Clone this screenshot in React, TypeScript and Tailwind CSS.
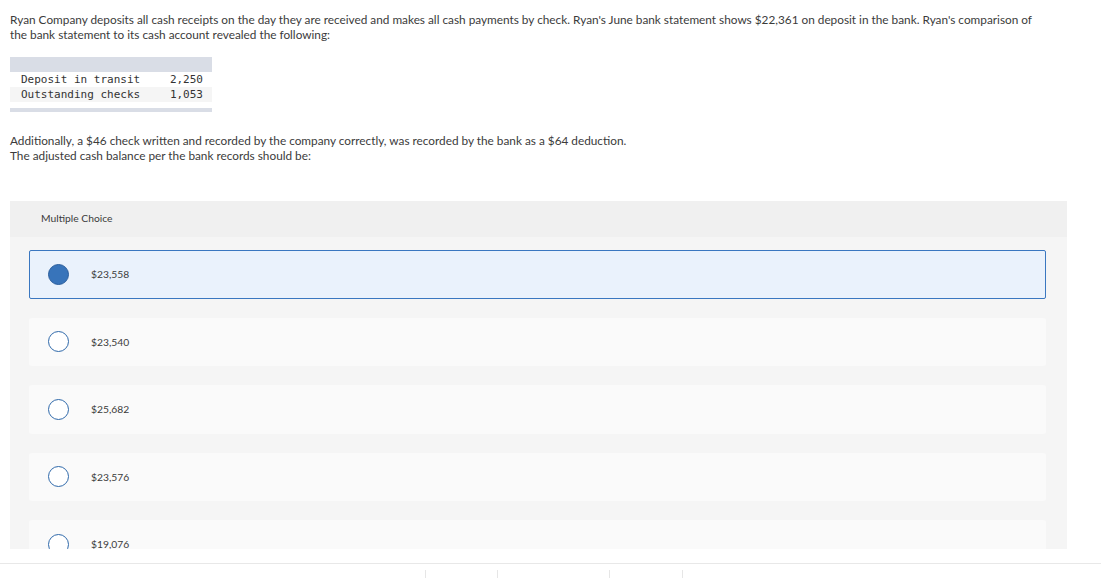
import React from "react";

const options = [
  { label: "$23,558", selected: true },
  { label: "$23,540", selected: false },
  { label: "$25,682", selected: false },
  { label: "$23,576", selected: false },
  { label: "$19,076", selected: false },
];

function Radio({ selected }: { selected: boolean }) {
  return selected ? (
    <span className="block w-[21px] h-[21px] rounded-full bg-[#3874ba] border border-[#2b5e9c] shrink-0" />
  ) : (
    <span className="block w-[21px] h-[21px] rounded-full bg-white border-[1.5px] border-[#2f69aa] shrink-0" />
  );
}

export default function App() {
  return (
    <div className="w-[1101px] h-[578px] bg-white overflow-hidden text-[#3b3b3b]" style={{ fontFamily: "Lato, 'Open Sans', sans-serif" }}>
      <div className="h-[549px] overflow-hidden pl-[10px]">
        <p className="pt-[12px] text-[11.8px] leading-[15px] w-[1034px]">
          Ryan Company deposits all cash receipts on the day they are received and makes all cash payments by check. Ryan's June bank statement shows $22,361 on deposit in the bank. Ryan's comparison of the bank statement to its cash account revealed the following:
        </p>
        <div className="mt-[15px] w-[202px] text-[#333]" style={{ fontFamily: "'DejaVu Sans Mono', monospace" }}>
          <div className="h-[15px] bg-[#d9dde6]" />
          <div className="h-[15px] flex items-center justify-between pl-[11px] pr-[9px] text-[11px] leading-[15px] bg-white">
            <span>Deposit in transit</span>
            <span>2,250</span>
          </div>
          <div className="h-[15px] flex items-center justify-between pl-[11px] pr-[9px] text-[11px] leading-[15px] bg-[#f5f5f5]">
            <span>Outstanding checks</span>
            <span>1,053</span>
          </div>
          <div className="h-[4px] mt-[6px] bg-[#d9dde6]" />
        </div>
        <p className="mt-[21px] text-[11.8px] leading-[15px]">
          Additionally, a $46 check written and recorded by the company correctly, was recorded by the bank as a $64 deduction.
          <br />
          The adjusted cash balance per the bank records should be:
        </p>
        <div className="mt-[38px] w-[1057px] bg-[#f5f5f5]">
          <div className="h-[36px] bg-[#f0f0f0] flex items-center pl-[31px] text-[10.3px]">Multiple Choice</div>
          <div className="flex flex-col gap-[19px] pt-[13px] pl-[19px] pr-[21px] pb-[20px]">
            {options.map((o) => (
              <div
                key={o.label}
                className={
                  o.selected
                    ? "h-[48.5px] flex items-center gap-[22px] pl-[18px] rounded-[2px] border border-[#3a77c0] bg-[#eaf2fc]"
                    : "h-[48.5px] flex items-center gap-[22px] pl-[19px] rounded-[3px] bg-[#fafafa]"
                }
              >
                <Radio selected={o.selected} />
                <span className="text-[10.3px] leading-[14px]">{o.label}</span>
              </div>
            ))}
          </div>
        </div>
      </div>
      <div className="mt-[14px] border-t border-[#e8e8e8] h-[15px] relative">
        <span className="absolute left-[425px] top-[6px] w-px h-[9px] bg-[#e6e6e6]" />
        <span className="absolute left-[497px] top-[6px] w-px h-[9px] bg-[#e6e6e6]" />
        <span className="absolute left-[609px] top-[6px] w-px h-[9px] bg-[#e6e6e6]" />
        <span className="absolute left-[682px] top-[6px] w-px h-[9px] bg-[#e6e6e6]" />
      </div>
    </div>
  );
}
